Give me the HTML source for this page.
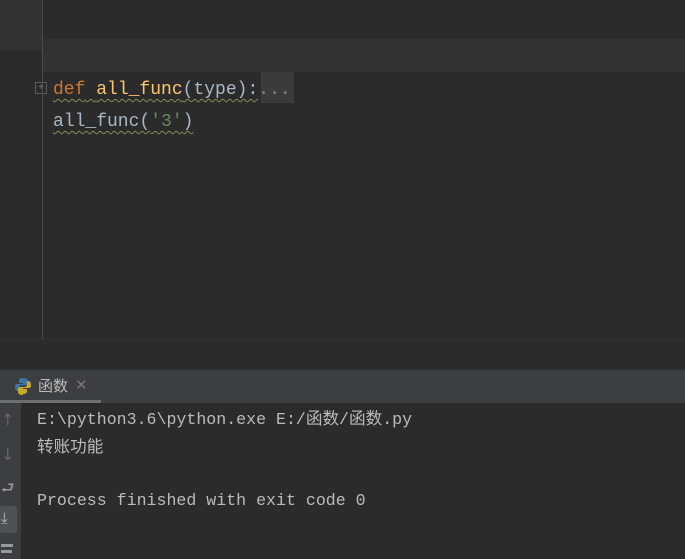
<!DOCTYPE html>
<html><head><meta charset="utf-8"><style>
body{margin:0;width:685px;height:559px;overflow:hidden;background:#2b2b2b;position:relative;font-family:"Liberation Mono","Noto Sans CJK SC",monospace}
div{position:absolute}
.code{font-size:18px;line-height:20px;white-space:pre}
.wavy{text-decoration:underline wavy #8a8a52;text-decoration-thickness:1px;text-underline-offset:4px}
.con{font-size:16.6px;color:#bbbbbb;white-space:pre;left:37px}
</style></head><body>
<div style="left:0;top:0;width:42px;height:339px;background:#313335"></div>
<div style="left:0;top:50px;width:42px;height:289px;background:#2b2b2b"></div>
<div style="left:42px;top:0;width:1px;height:339px;background:#4a4a4a"></div>
<div style="left:43px;top:39px;width:642px;height:33px;background:#323232"></div>
<div style="left:261px;top:72px;width:33px;height:31px;background:#3b3b3b"></div>
<div style="left:35px;top:82px;width:12px;height:12px;border:1px solid #5a5a5a;box-sizing:border-box;color:#777;font:10px/10px 'Liberation Sans';text-align:center">+</div>
<div class="code" style="left:53px;top:80px"><span class="wavy"><span style="color:#cc7832">def</span> <span style="color:#ffc66d">all_func</span><span style="color:#a9b7c6">(type):</span></span><span style="color:#888">...</span></div>
<div class="code" style="left:53px;top:112px"><span class="wavy" style="color:#a9b7c6">all_func(<span style="color:#6a8759">'3'</span>)</span></div>
<div style="left:0;top:339px;width:685px;height:1px;background:#333"></div>
<div style="left:0;top:370px;width:685px;height:33px;background:#3c3f41"></div>
<div style="left:0;top:400px;width:101px;height:3px;background:#6e6e6e"></div>
<svg style="position:absolute;left:14px;top:377px" width="18" height="18" viewBox="0 0 18 18"><path d="M9 1c-4 0-4 2-4 3v2h4v1H3C1 7 1 9 1 10s0 4 3 4h1v-3c0-2 1-3 3-3h4c1 0 2-1 2-2V4c0-2-2-3-5-3z" fill="#3a76aa"/><path d="M9 17c4 0 4-2 4-3v-2H9v-1h6c2 0 2-2 2-3s0-4-3-4h-1v3c0 2-1 3-3 3H6c-1 0-2 1-2 2v3c0 2 2 3 5 3z" fill="#c9a82c"/></svg>
<div style="left:38px;top:376px;color:#bbbbbb;font:15px/20px 'Noto Sans CJK SC',sans-serif">函数</div>
<div style="left:75px;top:376px;color:#777;font:15px/20px 'Liberation Sans',sans-serif">✕</div>
<div style="left:0;top:403px;width:21px;height:156px;background:#3c3f41"></div>
<div style="left:0;top:506px;width:17px;height:27px;background:#4e5254;border-radius:2px"></div>
<div style="left:1px;top:410px;color:#666;font:16px 'DejaVu Sans'">↑</div>
<div style="left:1px;top:445px;color:#666;font:16px 'DejaVu Sans'">↓</div>
<div style="left:1px;top:478px;color:#999;font:15px 'DejaVu Sans'">⮐</div>
<div style="left:1px;top:509px;color:#bbb;font:15px 'DejaVu Sans'">⤓</div>
<div style="left:1px;top:544px;width:12px;height:3px;background:#999"></div>
<div style="left:1px;top:550px;width:11px;height:3px;background:#999"></div>
<div class="con" style="top:405px">E:\python3.6\python.exe E:/函数/函数.py</div>
<div class="con" style="top:433px">转账功能</div>
<div class="con" style="top:491px">Process finished with exit code 0</div>
</body></html>
